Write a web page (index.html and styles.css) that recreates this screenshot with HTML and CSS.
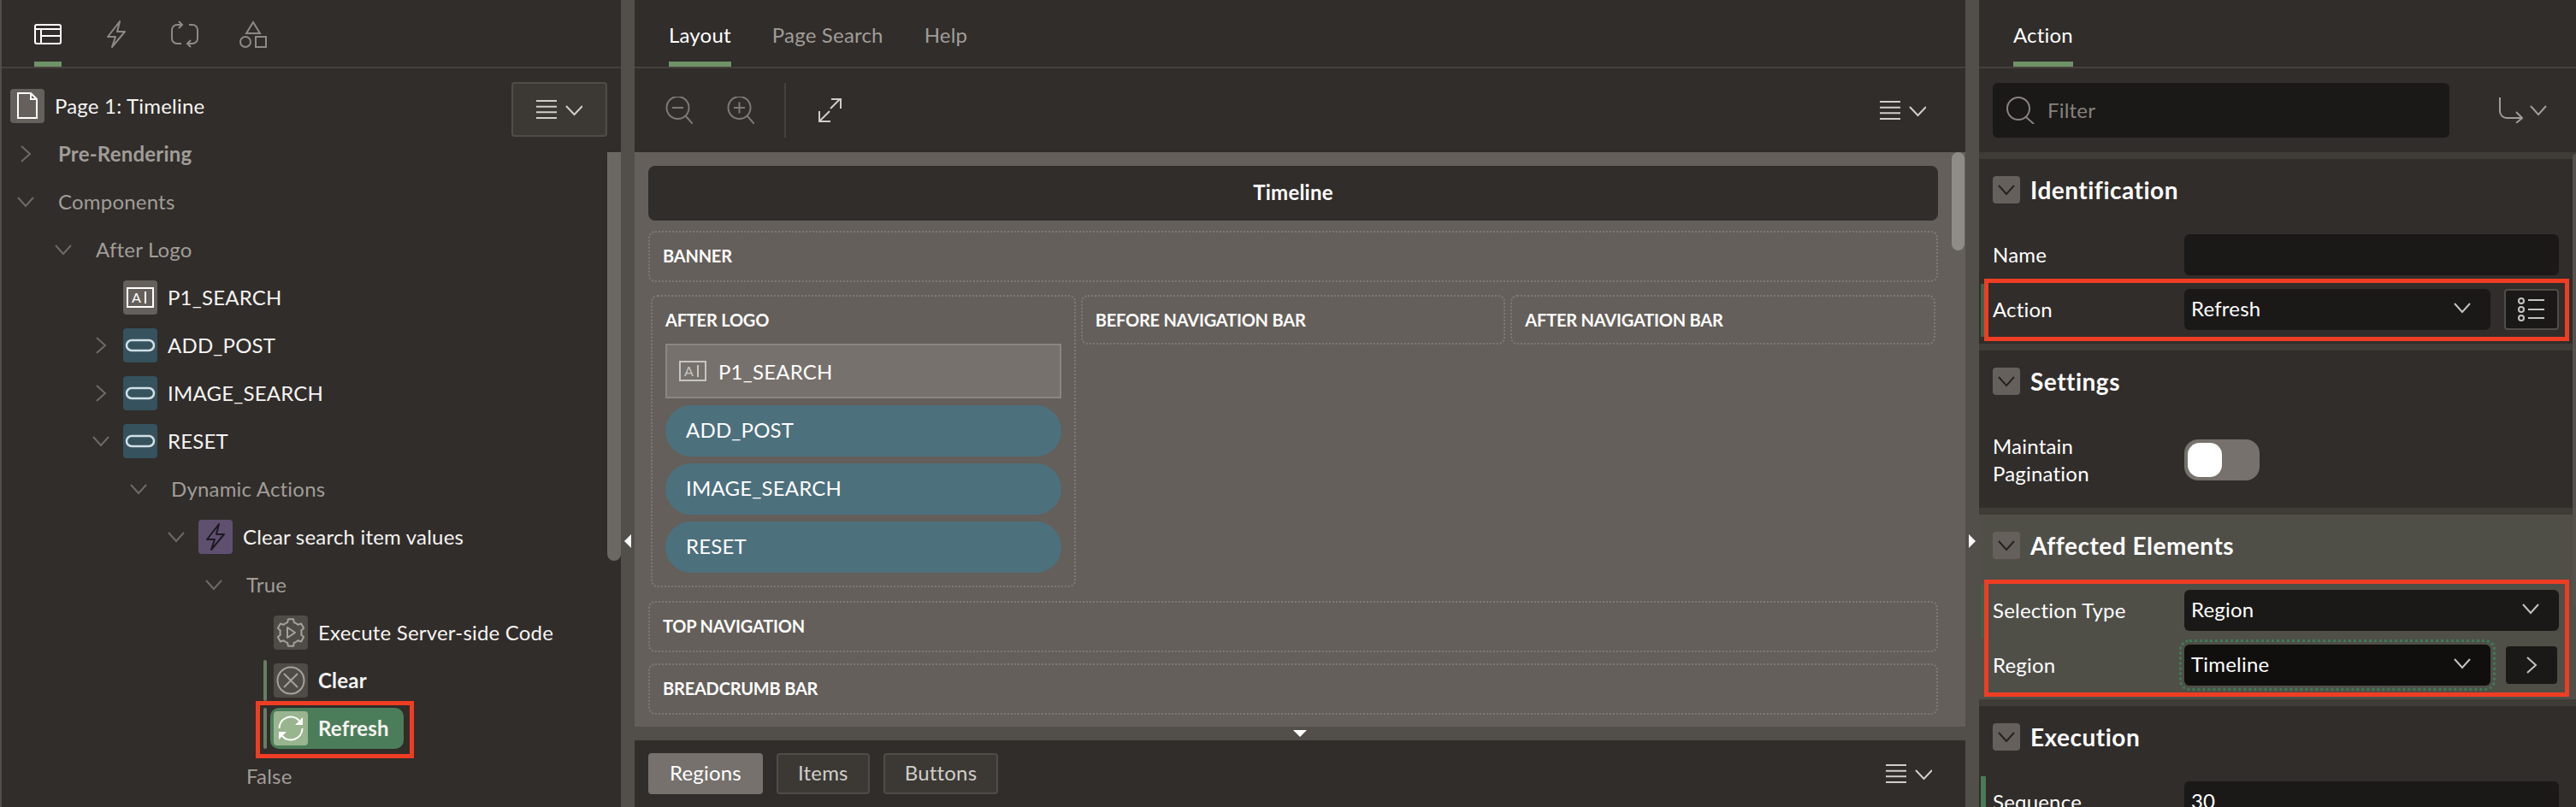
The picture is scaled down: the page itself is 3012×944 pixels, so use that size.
FILE: index.html
```html
<!DOCTYPE html>
<html>
<head>
<title>Page Designer</title>
<link rel="stylesheet" href="styles.css">
</head>
<body>

<svg class="defs">
  <symbol id="down" viewBox="0 0 24 24"><path d="M3 7l9 10 9-10" fill="none" stroke="currentColor" stroke-width="2"/></symbol>
  <symbol id="right" viewBox="0 0 24 24"><path d="M7 3l10 9-10 9" fill="none" stroke="currentColor" stroke-width="2"/></symbol>
  <symbol id="menu" viewBox="0 0 54 22">
    <path d="M0 1h24M0 7.7h24M0 14.3h24M0 21h24M35 7l9.5 10L54 7" fill="none" stroke="currentColor" stroke-width="2"/>
  </symbol>
  <symbol id="field" viewBox="0 0 40 40">
    <rect x="5" y="9" width="30" height="22" fill="none" stroke="currentColor" stroke-width="2"/>
    <path d="M26 13v14" stroke="currentColor" stroke-width="2"/>
    <text x="10" y="26" font-size="16" fill="currentColor" font-family="Lato">A</text>
  </symbol>
  <symbol id="btn" viewBox="0 0 40 40">
    <rect x="4" y="14" width="32" height="12" rx="6" fill="none" stroke="currentColor" stroke-width="2.500"/>
  </symbol>
  <symbol id="bolt" viewBox="0 0 24 32">
    <path d="M16 1L2 19h9L7 31l15-18h-9z" fill="none" stroke="currentColor" stroke-width="2" stroke-linejoin="round"/>
  </symbol>
</svg>

<div class="app">
  <div class="edge"></div>

  <div class="left">
    <div class="tabs icon-tabs">
      <div class="tab on">
        <svg class="ico-layout" viewBox="0 0 32 24" fill="none" stroke="currentColor" stroke-width="2"><rect x="1" y="1" width="30" height="22" rx="2"/><path d="M1 6h30M8 6v17M8 14h23"/></svg>
      </div>
      <div class="tab">
        <svg class="ico-32" viewBox="0 0 24 32"><use href="#bolt"/></svg>
      </div>
      <div class="tab">
        <svg class="ico-32" viewBox="0 0 32 32" fill="none" stroke="currentColor" stroke-width="2"><path d="M13 5H7a6 6 0 0 0-6 6v10a6 6 0 0 0 6 6h5M19 27h6a6 6 0 0 0 6-6V11a6 6 0 0 0-6-6h-4M9 1l4 4-4 4M23 23l-4 4 4 4"/></svg>
      </div>
      <div class="tab">
        <svg class="ico-32" viewBox="0 0 32 32" fill="none" stroke="currentColor" stroke-width="2"><path d="M16 2l8 13H8z"/><circle cx="7" cy="25" r="6"/><rect x="19" y="19" width="12" height="12"/></svg>
      </div>
    </div>

    <div class="tree">
      <div class="row page-row">
        <span class="badge grey">
          <svg viewBox="0 0 40 40" fill="none" stroke="#fff" stroke-width="2"><path d="M9 5h15l7 7v22H9zM24 5v7h7"/></svg>
        </span>
        <span class="name">Page 1: Timeline</span>
        <div class="menu-btn"><svg class="menu-ico"><use href="#menu"/></svg></div>
      </div>

      <div class="row lvl0"><svg class="chev"><use href="#right"/></svg><span class="name dim strong">Pre-Rendering</span></div>
      <div class="row lvl0"><svg class="chev"><use href="#down"/></svg><span class="name dim">Components</span></div>
      <div class="row lvl1"><svg class="chev"><use href="#down"/></svg><span class="name dim">After Logo</span></div>
      <div class="row lvl2"><span class="chev"></span><span class="badge grey"><svg><use href="#field"/></svg></span><span class="name">P1_SEARCH</span></div>
      <div class="row lvl2"><svg class="chev"><use href="#right"/></svg><span class="badge teal"><svg><use href="#btn"/></svg></span><span class="name">ADD_POST</span></div>
      <div class="row lvl2"><svg class="chev"><use href="#right"/></svg><span class="badge teal"><svg><use href="#btn"/></svg></span><span class="name">IMAGE_SEARCH</span></div>
      <div class="row lvl2"><svg class="chev"><use href="#down"/></svg><span class="badge teal"><svg><use href="#btn"/></svg></span><span class="name">RESET</span></div>
      <div class="row lvl3"><svg class="chev"><use href="#down"/></svg><span class="name dim">Dynamic Actions</span></div>
      <div class="row lvl4"><svg class="chev"><use href="#down"/></svg><span class="badge purple"><svg class="bolt-ico" viewBox="0 0 24 32"><use href="#bolt"/></svg></span><span class="name">Clear search item values</span></div>
      <div class="row lvl5"><svg class="chev"><use href="#down"/></svg><span class="name dim">True</span></div>
      <div class="row lvl6"><span class="chev"></span>
        <span class="badge dark">
          <svg viewBox="0 0 40 40" fill="none" stroke="currentColor" stroke-width="2" stroke-linejoin="round">
            <g transform="translate(20 20)">
              <path id="tooth" d="M-6.250-10.830L-3.860-11.890-3.050-15.700H3.050L3.860-11.890 6.250-10.830"/>
              <use href="#tooth" transform="rotate(60)"/>
              <use href="#tooth" transform="rotate(120)"/>
              <use href="#tooth" transform="rotate(180)"/>
              <use href="#tooth" transform="rotate(240)"/>
              <use href="#tooth" transform="rotate(300)"/>
            </g>
            <path d="M16 14l9 6-9 6z"/>
          </svg>
        </span>
        <span class="name">Execute Server-side Code</span>
      </div>
      <div class="row lvl6 flagged"><span class="chev"></span>
        <span class="badge dark">
          <svg viewBox="0 0 40 40" fill="none" stroke="currentColor" stroke-width="2"><circle cx="20" cy="20" r="15.500"/><path d="M12 12l16 16M28 12L12 28"/></svg>
        </span>
        <span class="name strong">Clear</span>
      </div>
      <div class="row lvl6 flagged"><span class="chev"></span>
        <div class="pill">
          <span class="badge sage">
            <svg viewBox="0 0 40 40" fill="none" stroke="#fff" stroke-width="2"><path d="M6.500 20A13.500 13.500 0 0 1 30 11M33.500 20A13.500 13.500 0 0 1 10 29"/><path d="M34 7v9h-9zM6 33v-9h9z" fill="#fff" stroke="none"/></svg>
          </span>
          <span class="name strong">Refresh</span>
        </div>
      </div>
      <div class="row lvl5"><span class="chev"></span><span class="name dim">False</span></div>
    </div>

    <div class="tree-thumb"></div>
  </div>

  <div class="splitter">
    <span class="arrow-left"></span>
  </div>

  <div class="middle">
    <div class="tabs text-tabs">
      <div class="tab on">Layout</div>
      <div class="tab">Page Search</div>
      <div class="tab">Help</div>
    </div>

    <div class="toolbar">
      <svg class="tool" viewBox="0 0 32 32" fill="none" stroke="currentColor" stroke-width="2"><circle cx="14.500" cy="13" r="13"/><path d="M24 23l8 9M8 13h13"/></svg>
      <svg class="tool" viewBox="0 0 32 32" fill="none" stroke="currentColor" stroke-width="2"><circle cx="14.500" cy="13" r="13"/><path d="M24 23l8 9M8 13h13M14.500 6.500v13"/></svg>
      <span class="tool-sep"></span>
      <svg class="tool-expand" viewBox="0 0 27 28" fill="none" stroke="currentColor" stroke-width="2"><path d="M14 12L25 1M15 1h11v11M13 15L1 27M1 15v12h13"/></svg>
      <svg class="menu-ico push"><use href="#menu"/></svg>
    </div>

    <div class="canvas">
      <div class="page-title">Timeline</div>
      <div class="slot wide banner"><div class="slot-label">BANNER</div></div>

      <div class="slot-row">
        <div class="slot after-logo">
          <div class="slot-label">AFTER LOGO</div>
          <div class="item">
            <svg class="item-ico" viewBox="5 8 30 24"><use href="#field" width="40" height="40"/></svg>
            P1_SEARCH
          </div>
          <div class="button">ADD_POST</div>
          <div class="button">IMAGE_SEARCH</div>
          <div class="button">RESET</div>
        </div>
        <div class="slot"><div class="slot-label">BEFORE NAVIGATION BAR</div></div>
        <div class="slot"><div class="slot-label">AFTER NAVIGATION BAR</div></div>
      </div>

      <div class="slot wide top-nav"><div class="slot-label">TOP NAVIGATION</div></div>
      <div class="slot wide crumb"><div class="slot-label">BREADCRUMB BAR</div></div>
      <div class="slot wide next"></div>

      <div class="canvas-thumb"></div>
    </div>

    <div class="h-splitter"><span class="arrow-down"></span></div>

    <div class="gallery">
      <div class="gal-btn on">Regions</div>
      <div class="gal-btn">Items</div>
      <div class="gal-btn">Buttons</div>
      <svg class="menu-ico push"><use href="#menu"/></svg>
    </div>
  </div>

  <div class="splitter">
    <span class="arrow-right"></span>
  </div>

  <div class="right">
    <div class="tabs text-tabs action-tabs">
      <div class="tab on">Action</div>
    </div>

    <div class="filter-bar">
      <div class="filter">
        <svg class="filter-ico" viewBox="0 0 34 32" fill="none" stroke="currentColor" stroke-width="2"><circle cx="15" cy="14" r="13"/><path d="M24 24l9 8"/></svg>
        <span class="filter-text">Filter</span>
      </div>
      <svg class="goto-ico" viewBox="0 0 28 30" fill="none" stroke="currentColor" stroke-width="2"><path d="M1 0v16a8 8 0 0 0 8 8h18M20 17l7 7-7 6"/></svg>
      <svg class="goto-chev"><use href="#down"/></svg>
    </div>

    <div class="section">
      <div class="sec-head"><span class="sec-tog"><svg><use href="#down"/></svg></span>Identification</div>
      <div class="prop"><label>Name</label><div class="input"></div></div>
      <div class="marked">
        <div class="prop changed-dark"><label>Action</label>
          <div class="input select short">Refresh<svg><use href="#down"/></svg></div>
          <div class="side-btn lined">
            <svg viewBox="0 0 32 28" fill="none" stroke="currentColor" stroke-width="2"><circle cx="4" cy="4" r="3"/><circle cx="4" cy="14" r="3"/><circle cx="4" cy="24" r="3"/><path d="M12 3h19M12 14h19M12 24h19"/></svg>
          </div>
        </div>
      </div>
    </div>

    <div class="section">
      <div class="sec-head"><span class="sec-tog"><svg><use href="#down"/></svg></span>Settings</div>
      <div class="prop tall"><label>Maintain<br>Pagination</label><div class="toggle"><span class="knob"></span></div></div>
    </div>

    <div class="section hilite">
      <div class="sec-head"><span class="sec-tog"><svg><use href="#down"/></svg></span>Affected Elements</div>
      <div class="marked">
        <div class="prop changed-dark"><label>Selection Type</label>
          <div class="input select">Region<svg><use href="#down"/></svg></div>
        </div>
        <div class="prop"><label>Region</label>
          <div class="input select short focus">Timeline<svg><use href="#down"/></svg></div>
          <div class="side-btn plain"><svg><use href="#right"/></svg></div>
        </div>
      </div>
    </div>

    <div class="section">
      <div class="sec-head"><span class="sec-tog"><svg><use href="#down"/></svg></span>Execution</div>
      <div class="prop changed"><label>Sequence</label><div class="input">30</div></div>
    </div>

    <div class="right-thumb"></div>
  </div>
</div>

</body>
</html>
```

FILE: styles.css
```css
html, body {
  margin: 0;
  height: 944px;
  overflow: hidden;
  background: #312d2a;
  color: #fff;
  font-family: Lato, sans-serif;
  font-size: 24px;
  letter-spacing: .2px;
}
.defs { display: none; }
svg { display: block; }

.app {
  display: flex;
  width: 3012px;
  height: 944px;
}
.edge { width: 2px; background: #524e49; }

/* panels */
.left {
  position: relative;
  width: 724px;
}
.splitter {
  position: relative;
  width: 16px;
  background: #524e49;
}
.middle {
  width: 1556px;
  display: flex;
  flex-direction: column;
}
.right {
  position: relative;
  width: 698px;
  overflow: hidden;
}

/* tabs */
.tabs {
  display: flex;
  height: 78px;
  border-bottom: 2px solid #45413c;
  color: #a09d99;
}
.tab {
  height: 64px;
  padding-top: 8px;
  display: flex;
  align-items: center;
  border-bottom: 6px solid transparent;
}
.tab.on {
  color: #fff;
  border-bottom-color: #6f9268;
}
.icon-tabs { padding-left: 38px; gap: 48px; color: #8d8a85; }
.icon-tabs .tab { width: 32px; justify-content: center; }
.ico-layout { width: 32px; height: 24px; }
.ico-32 { width: 32px; height: 32px; }
.text-tabs { padding-left: 40px; gap: 48px; }
.action-tabs { padding-left: 40px; }

/* tree */
.tree { padding: 16px 16px 0 0; }
.row {
  position: relative;
  display: flex;
  align-items: center;
  height: 56px;
}
.page-row { padding-left: 10px; }
.chev {
  flex: none;
  width: 24px;
  height: 24px;
  margin-right: 26px;
  color: #6e6a66;
}
.lvl0 { padding-left: 16px; }
.lvl1 { padding-left: 60px; }
.lvl2 { padding-left: 104px; }
.lvl3 { padding-left: 148px; }
.lvl4 { padding-left: 192px; }
.lvl5 { padding-left: 236px; }
.lvl6 { padding-left: 280px; }
.badge {
  flex: none;
  width: 40px;
  height: 40px;
  border-radius: 4px;
  margin-left: -12px;
  margin-right: 12px;
  color: #fff;
}
.page-row .badge { margin-left: 0; }
.badge svg { width: 40px; height: 40px; }
.badge.grey { background: #65605b; }
.badge.teal { background: #36525c; color: #cfe0e5; }
.badge.purple { background: #5f5070; color: #1d1a22; }
.badge.dark { background: #4f4b47; color: #a5a29e; }
.badge.sage { background: #98b58f; margin: 0 12px 0 0; }
.badge .bolt-ico { width: 24px; height: 32px; margin: 4px 8px; }
.name { white-space: nowrap; color: #f5f4f2; margin-top: -2px; }
.name.dim { color: #a09d99; }
.name.strong { font-weight: 700; }
.flagged::before {
  content: "";
  position: absolute;
  left: 306px;
  top: 4px;
  width: 4px;
  height: 48px;
  border-radius: 2px;
  background: #667e63;
}
.pill {
  position: relative;
  display: flex;
  align-items: center;
  height: 48px;
  margin-left: -16px;
  padding: 0 17px 0 4px;
  border-radius: 10px;
  background: #4c7d5a;
}
.pill::after {
  content: "";
  position: absolute;
  left: -17px;
  right: -12px;
  top: -8px;
  bottom: -11px;
  border: 5px solid #ee3d23;
}
.menu-btn {
  position: absolute;
  right: 0;
  top: 0;
  box-sizing: border-box;
  width: 112px;
  height: 64px;
  display: flex;
  align-items: center;
  justify-content: center;
  background: #3c3935;
  border: 2px solid #504d48;
  border-radius: 4px;
}
.menu-ico { width: 54px; height: 22px; color: #d0ceca; }
.push { margin-left: auto; }
.tree-thumb {
  position: absolute;
  right: 0;
  top: 178px;
  width: 16px;
  height: 478px;
  border-radius: 0 0 8px 8px;
  background: #6b6763;
}
.arrow-left, .arrow-right, .arrow-down {
  position: absolute;
  width: 0;
  height: 0;
  border-style: solid;
  border-color: transparent;
}
.arrow-left {
  left: 4px;
  top: 625px;
  border-width: 8px 8px 8px 0;
  border-right-color: #fff;
}
.arrow-right {
  left: 4px;
  top: 625px;
  border-width: 8px 0 8px 8px;
  border-left-color: #fff;
}

/* middle */
.toolbar {
  display: flex;
  align-items: center;
  height: 98px;
  padding: 0 46px 0 36px;
  color: #7d7975;
}
.tool { width: 32px; height: 32px; margin-right: 40px; }
.tool-sep { width: 2px; height: 64px; background: #45413c; margin-left: -5px; }
.tool-expand { width: 27px; height: 28px; margin-left: 38px; color: #cfcdc9; }

.canvas {
  position: relative;
  height: 672px;
  box-sizing: border-box;
  padding: 16px 32px 0 16px;
  background: #645f5a;
  overflow: hidden;
}
.page-title {
  height: 64px;
  line-height: 62px;
  text-align: center;
  font-weight: 700;
  font-size: 24px;
  background: #312d2a;
  border-radius: 8px;
}
.slot {
  box-sizing: border-box;
  height: 58px;
  border: 2px dotted #7e7a75;
  border-radius: 8px;
}
.slot-label {
  height: 54px;
  line-height: 54px;
  padding-left: 15px;
  font-size: 20px;
  font-weight: 700;
  letter-spacing: -.2px;
  white-space: nowrap;
}
.slot.wide { height: 60px; }
.banner { margin-top: 12px; }
.slot-row {
  display: grid;
  grid-template-columns: repeat(3, 1fr);
  align-items: start;
  gap: 6px;
  margin: 15px 3px 0;
}
.slot.after-logo {
  height: 342px;
  padding: 0 15px;
}
.after-logo .slot-label { padding-left: 0; }
.item {
  box-sizing: border-box;
  display: flex;
  align-items: center;
  height: 64px;
  margin-top: 1px;
  padding-left: 14px;
  background: #76716c;
  border: 2px solid #8a8681;
}
.item-ico { width: 32px; height: 24px; margin-right: 14px; color: #c8c5c1; }
.button {
  height: 60px;
  line-height: 58px;
  margin-top: 8px;
  padding-left: 24px;
  background: #4d707d;
  border-radius: 30px;
}
.top-nav { margin-top: 16px; height: 59px; }
.crumb { margin-top: 13px; height: 58px; }
.next { margin-top: 16px; }
.canvas-thumb {
  position: absolute;
  right: 1px;
  top: 0;
  width: 15px;
  height: 115px;
  border-radius: 8px;
  background: #8f8b87;
}
.h-splitter {
  position: relative;
  height: 16px;
  background: #524e49;
}
.arrow-down {
  left: 770px;
  top: 4px;
  border-width: 8px 8px 0;
  border-top-color: #fff;
}
.gallery {
  display: flex;
  align-items: center;
  gap: 16px;
  height: 78px;
  padding: 0 39px 0 16px;
  color: #d0ceca;
}
.gal-btn {
  box-sizing: border-box;
  height: 48px;
  line-height: 42px;
  padding: 0 23px;
  background: #3c3935;
  border: 2px solid #504d48;
  border-radius: 4px;
}
.gal-btn.on {
  color: #fff;
  background: #76716c;
  border-color: #76716c;
}

/* property editor */
.filter-bar {
  display: flex;
  align-items: center;
  height: 98px;
  padding-left: 16px;
  border-bottom: 8px solid #3f3c37;
}
.filter {
  display: flex;
  align-items: center;
  width: 534px;
  height: 64px;
  box-sizing: border-box;
  padding-left: 15px;
  background: #1a1917;
  border-radius: 6px;
  color: #86827d;
}
.filter-ico { width: 34px; height: 32px; margin-right: 15px; }
.filter-text { margin-top: -2px; }
.goto-ico { width: 28px; height: 30px; margin-left: 58px; color: #a09d99; }
.goto-chev { width: 24px; height: 24px; margin-left: 6px; color: #a09d99; }
.section {
  padding: 20px 20px 8px 16px;
  border-bottom: 8px solid #3f3c37;
}
.section.hilite { background: #4f4f48; }
.sec-head {
  display: flex;
  align-items: center;
  height: 32px;
  margin-bottom: 28px;
  font-size: 28px;
  font-weight: 700;
  letter-spacing: .5px;
}
.sec-tog {
  width: 32px;
  height: 32px;
  margin-right: 12px;
  border-radius: 4px;
  background: #65605b;
  color: #26231f;
}
.sec-tog svg { width: 24px; height: 24px; margin: 4px; }
.prop {
  position: relative;
  display: flex;
  align-items: center;
  height: 64px;
}
.prop.tall { height: 96px; }
.prop label { flex: none; width: 224px; line-height: 32px; }
.prop.changed-dark::before,
.prop.changed::before {
  content: "";
  position: absolute;
  left: -14px;
  top: 2px;
  width: 4px;
  height: 62px;
  background: #3f5f49;
}
.prop.changed::before { width: 6px; background: #4a7a56; }
.input {
  position: relative;
  box-sizing: border-box;
  flex: 1;
  height: 48px;
  line-height: 46px;
  padding-left: 8px;
  background: #1a1917;
  border-radius: 6px;
}
.select svg {
  position: absolute;
  right: 21px;
  top: 10px;
  width: 24px;
  height: 24px;
  color: #c5c3c0;
}
.input.short { flex: none; width: 358px; }
.input.focus {
  background: #100f0d;
  outline: 3px dotted #3f7a55;
  outline-offset: 3px;
}
.side-btn {
  box-sizing: border-box;
  margin-left: 16px;
  width: 64px;
  height: 48px;
  display: flex;
  align-items: center;
  justify-content: center;
  color: #c5c3c0;
  border-radius: 4px;
  background: #1a1917;
}
.side-btn.lined { border: 2px solid #504d48; }
.side-btn.lined svg { width: 32px; height: 28px; }
.side-btn.plain { width: 60px; height: 44px; margin-left: 18px; }
.side-btn.plain svg { width: 24px; height: 24px; }
.marked { position: relative; }
.marked::after {
  content: "";
  position: absolute;
  left: -10px;
  right: -12px;
  top: -4px;
  bottom: -5px;
  border: 5px solid #ee3d23;
  pointer-events: none;
}
.toggle {
  box-sizing: border-box;
  width: 88px;
  height: 48px;
  padding: 4px;
  background: #76716c;
  border-radius: 16px;
}
.knob {
  display: block;
  width: 40px;
  height: 40px;
  border-radius: 14px;
  background: #fff;
}
.right-thumb {
  position: absolute;
  right: 0;
  top: 180px;
  width: 4px;
  height: 530px;
  border-radius: 4px 0 0 4px;
  background: #55514c;
}
```
